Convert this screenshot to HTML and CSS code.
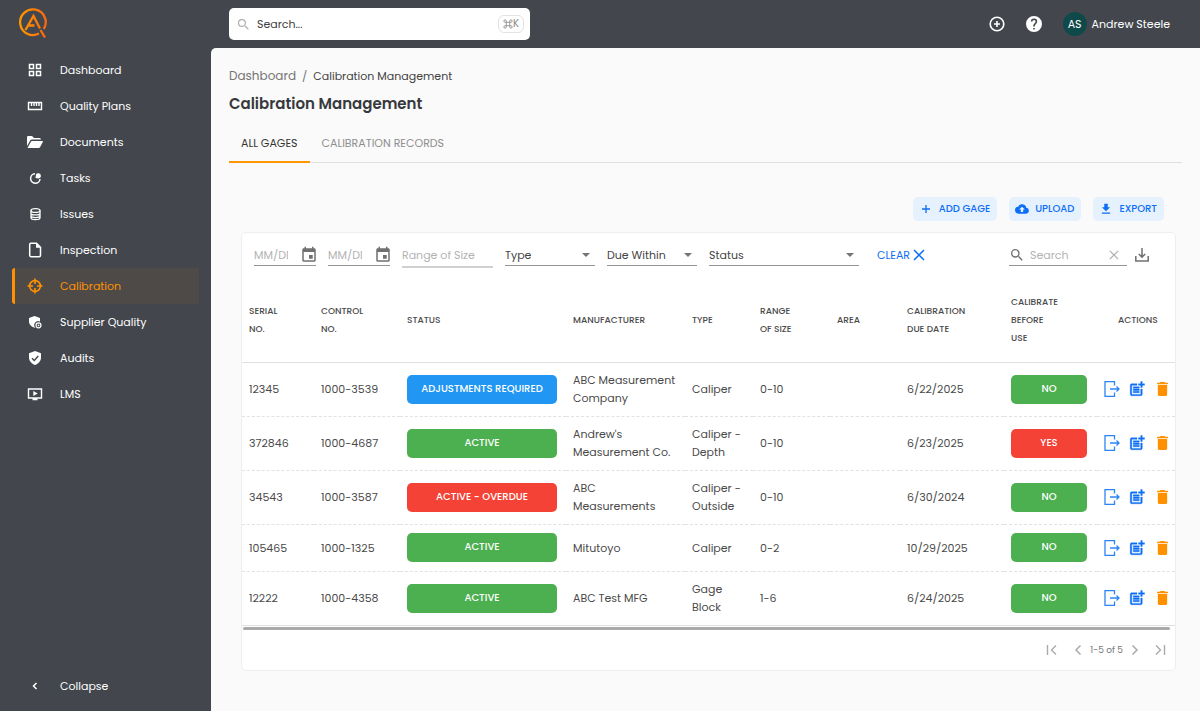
FILE: index.html
```html
<!DOCTYPE html>
<html lang="en">
<head>
<meta charset="utf-8">
<title>Calibration Management</title>
<link rel="stylesheet" href="styles.css">
</head>
<body>
<svg class="sprite" aria-hidden="true">
  <symbol id="i-search" viewBox="0 0 24 24"><path d="M15.5 14h-.79l-.28-.27A6.47 6.47 0 0 0 16 9.5 6.5 6.5 0 1 0 9.5 16c1.61 0 3.09-.59 4.23-1.57l.27.28v.79l5 4.99L20.49 19l-4.99-5zm-6 0a4.5 4.5 0 1 1 0-9 4.5 4.5 0 0 1 0 9z"/></symbol>
  <symbol id="i-event" viewBox="0 0 24 24"><path d="M17 12h-5v5h5v-5zM16 1v2H8V1H6v2H5c-1.11 0-2 .9-2 2v14a2 2 0 0 0 2 2h14c1.1 0 2-.9 2-2V5c0-1.1-.9-2-2-2h-1V1h-2zm3 18H5V8h14v11z"/></symbol>
  <symbol id="i-x" viewBox="0 0 12 12"><path d="M1 1l10 10M11 1L1 11" fill="none" stroke="currentColor" stroke-width="1.5"/></symbol>
  <symbol id="i-open" viewBox="0 0 16 16"><path d="M10.500 4.500V.7H1v14.600h9.500V11.500M6 8h9M12.500 5.500L15 8l-2.500 2.500" fill="none" stroke="#2b84f5" stroke-width="1.300"/></symbol>
  <symbol id="i-add" viewBox="0 0 24 24"><path d="M17 19.220H5V7h7V5H5c-1.100 0-2 .900-2 2v12c0 1.100.900 2 2 2h12c1.100 0 2-.900 2-2v-7h-2v7.220z M19 2h-2v3h-3v2h3v2.990h2V7h3V5h-3V2z M7 9h8v2H7z M7 12h8v2H7z M7 15h8v2H7z" stroke="currentColor" stroke-width=".5"/></symbol>
  <symbol id="i-trash" viewBox="0 0 14 18"><path d="M1 16c0 1.100.900 2 2 2h8c1.100 0 2-.900 2-2V4H1v12zM14 1h-3.500l-1-1h-5l-1 1H0v2h14V1z"/></symbol>
  <symbol id="i-down" viewBox="0 0 24 24"><path d="M19 9h-4V3H9v6H5l7 7 7-7zM5 18v2h14v-2H5z"/></symbol>
  <symbol id="i-first" viewBox="0 0 12 12"><path d="M1.500 1v10M10 1.500L5.500 6l4.500 4.500" fill="none" stroke="currentColor" stroke-width="1.400"/></symbol>
  <symbol id="i-prev" viewBox="0 0 12 12"><path d="M8.500 1.500L4 6l4.500 4.500" fill="none" stroke="currentColor" stroke-width="1.500"/></symbol>
</svg>

<header class="topbar">
  <a class="logo" href="#" aria-label="Home">
    <svg width="30" height="32" viewBox="0 0 30 32" fill="none" stroke-width="2.300">
      <defs><linearGradient id="flame" x1="0" y1="0" x2="1" y2="0"><stop offset="0" stop-color="#ff9800"/><stop offset="1" stop-color="#f9690e"/></linearGradient></defs>
      <path stroke="url(#flame)" d="M20 26.500A12.800 12.800 0 1 1 24.800 22M6.500 23L14.500 9l6.500 12.500M9.500 18.500h6M21.500 23l4.500 7.500"/>
    </svg>
  </a>
  <label class="global-search">
    <svg width="15" height="15"><use href="#i-search"/></svg>
    <input type="text" placeholder="Search..." aria-label="Search everything">
    <kbd><svg width="10" height="10" viewBox="0 0 24 24" fill="none" stroke="currentColor" stroke-width="2"><path d="M8 8h8v8H8zM8 8V5a3 3 0 1 0-3 3zM16 8h3a3 3 0 1 0-3-3zM16 16v3a3 3 0 1 0 3-3zM8 16H5a3 3 0 1 0 3 3z"/></svg>K</kbd>
  </label>
  <div class="user-tools">
    <button class="icon-btn" aria-label="Create"><svg width="16" height="16" viewBox="0 0 16 16" fill="none" stroke="currentColor" stroke-width="1.600"><circle cx="8" cy="8" r="6.800"/><path d="M8 5v6M5 8h6"/></svg></button>
    <button class="icon-btn" aria-label="Help"><svg width="16" height="16" viewBox="2 2 20 20" fill="currentColor"><path d="M12 2a10 10 0 1 0 0 20 10 10 0 0 0 0-20zm1 17h-2v-2h2v2zm2.070-7.750l-.900.920C13.450 12.900 13 13.500 13 15h-2v-.500c0-1.100.450-2.100 1.170-2.830l1.240-1.260c.370-.360.590-.860.590-1.410a2 2 0 1 0-4 0H8a4 4 0 1 1 8 0c0 .880-.360 1.680-.930 2.250z"/></svg></button>
    <button class="account"><span class="avatar">AS</span>Andrew Steele</button>
  </div>
</header>

<div class="shell">
  <nav class="sidebar" aria-label="Main">
    <a href="#"><svg width="16" height="16" viewBox="0 0 16 16" fill="none" stroke="currentColor" stroke-width="1.500"><path d="M2.500 2.500H6.500V6.500H2.500zM9.500 2.500h4v4h-4zM2.500 9.500h4v4h-4zM9.500 9.500h4v4h-4z"/></svg>Dashboard</a>
    <a href="#"><svg width="16" height="16" viewBox="0 0 16 16" fill="none" stroke="currentColor" stroke-width="1.400"><path d="M1.500 4.500h13v7h-13zM4.500 5v3M7 5v3M9.500 5v3M12 5v3"/></svg>Quality Plans</a>
    <a href="#"><svg width="16" height="16" viewBox="0 0 16 16" fill="currentColor"><path d="M0 3.300Q0 2 1.300 2H5l2 2h5.500Q14 4 14 5.500H5Q3.800 5.500 3.200 6.500L0 12zM.500 14L4 7.500Q4.300 7 5 7H15.500q.700 0 .4.700L13 13.200q-.4.800-1.200.8z"/></svg>Documents</a>
    <a href="#"><svg width="16" height="16" viewBox="0 0 16 16"><path d="M8 3.800A4.700 4.700 0 1 0 13 9" fill="none" stroke="currentColor" stroke-width="1.500"/><path d="M8.500 8L9 4.500Q9.500 3.200 11 3.200a2.600 2.600 0 0 1 .5 5.200z" fill="currentColor"/></svg>Tasks</a>
    <a href="#"><svg width="16" height="16" viewBox="0 0 16 16" fill="none" stroke="currentColor" stroke-width="1.300"><ellipse cx="8.500" cy="4.500" rx="4.500" ry="1.900"/><path d="M4 4.500v7.300c0 2.500 9 2.500 9 0V4.500M4 7.200c0 2.300 9 2.300 9 0M4 9.800c0 2.300 9 2.300 9 0"/></svg>Issues</a>
    <a href="#"><svg width="16" height="16" viewBox="0 0 16 16"><path d="M3.800 1.200H9.500L13.500 5.200V13.300Q13.500 14.800 12 14.800H4.300Q2.700 14.800 2.700 13.300V2.500Q2.700 1.200 3.800 1.200z" fill="none" stroke="currentColor" stroke-width="1.500"/><path d="M9 .800v5h5z" fill="currentColor"/></svg>Inspection</a>
    <a href="#" class="current" aria-current="page"><svg width="16" height="16" viewBox="0 0 16 16" fill="none" stroke="currentColor" stroke-width="1.600"><circle cx="8" cy="8" r="5.400"/><path d="M8 .500V6M8 10v5.500M.500 8H6M10 8h5.500"/></svg>Calibration</a>
    <a href="#"><svg width="16" height="16" viewBox="0 0 16 16"><path d="M7.500 2L13 4v3.500A4 4 0 0 0 8.500 14C4.500 13 2 10.500 2 7.500V4z" fill="currentColor"/><circle cx="11.500" cy="11.300" r="2.500" fill="none" stroke="currentColor" stroke-width="1.200"/><circle cx="11.500" cy="11.300" r=".9" fill="currentColor"/></svg>Supplier Quality</a>
    <a href="#"><svg width="16" height="16" viewBox="0 0 16 16"><path d="M8 1l6 2.300V7.500c0 3.500-2.500 6.300-6 7.500-3.500-1.200-6-4-6-7.500V3.300z" fill="currentColor"/><path d="M5 8.200l2.200 2.200L11.300 6" fill="none" stroke="#43474d" stroke-width="1.400"/></svg>Audits</a>
    <a href="#"><svg width="16" height="16" viewBox="0 0 16 16"><path d="M1.500 3h13v9h-13zM5.500 13.500h5" fill="none" stroke="currentColor" stroke-width="1.400"/><path d="M6.300 5l4.400 2.500-4.400 2.500z" fill="currentColor"/></svg>LMS</a>
    <button class="collapse"><svg width="16" height="16" viewBox="0 0 16 16" fill="none" stroke="currentColor" stroke-width="1.500"><path d="M9.500 5L6.500 8l3 3"/></svg>Collapse</button>
  </nav>

  <main class="content">
    <nav class="crumbs" aria-label="Breadcrumb"><a href="#">Dashboard</a><span>/</span><span class="here">Calibration Management</span></nav>
    <h1>Calibration Management</h1>
    <div class="tabs" role="tablist">
      <button role="tab" aria-selected="true" class="tab selected">ALL GAGES</button>
      <button role="tab" aria-selected="false" class="tab">CALIBRATION RECORDS</button>
    </div>

    <div class="page-actions">
      <button><svg width="14" height="14" viewBox="0 0 14 14" fill="none" stroke="currentColor" stroke-width="1.300"><path d="M7 3v8M3 7h8"/></svg>ADD GAGE</button>
      <button><svg width="14" height="14" viewBox="0 0 24 24" fill="currentColor"><path d="M19.350 10.040A7.490 7.490 0 0 0 5.350 8.040 6 6 0 0 0 6 20h13a5 5 0 0 0 .35-9.960zM14 13v4h-4v-4H7l5-5 5 5h-3z"/></svg>UPLOAD</button>
      <button><svg width="14" height="14" fill="currentColor"><use href="#i-down"/></svg>EXPORT</button>
    </div>

    <section class="card">
      <form class="filters">
        <label class="field date"><input type="text" placeholder="MM/DD/YYYY" aria-label="Due from"><svg width="18" height="18"><use href="#i-event"/></svg></label>
        <label class="field date"><input type="text" placeholder="MM/DD/YYYY" aria-label="Due to"><svg width="18" height="18"><use href="#i-event"/></svg></label>
        <label class="field range"><input type="text" placeholder="Range of Size" aria-label="Range of Size"></label>
        <label class="field pick"><select aria-label="Type"><option>Type</option></select></label>
        <label class="field pick"><select aria-label="Due Within"><option>Due Within</option></select></label>
        <label class="field pick wide"><select aria-label="Status"><option>Status</option></select></label>
        <button type="reset" class="clear">CLEAR<svg width="12" height="12"><use href="#i-x"/></svg></button>
        <label class="field find"><svg width="16" height="16"><use href="#i-search"/></svg><input type="text" placeholder="Search" aria-label="Search gages"><svg class="faint" width="10" height="10"><use href="#i-x"/></svg></label>
        <button type="button" class="save" aria-label="Download"><svg width="16" height="16" viewBox="0 0 16 16" fill="none" stroke="currentColor" stroke-width="1.500"><path d="M8 1v9M4.800 7L8 10.200 11.200 7M1.800 9v5h12.400V9"/></svg></button>
      </form>

      <table>
        <colgroup><col class="c-serial"><col class="c-control"><col class="c-status"><col class="c-maker"><col class="c-type"><col class="c-range"><col class="c-area"><col class="c-due"><col class="c-before"><col class="c-actions"></colgroup>
        <thead><tr><th>SERIAL<br>NO.</th><th>CONTROL<br>NO.</th><th>STATUS</th><th>MANUFACTURER</th><th>TYPE</th><th>RANGE<br>OF SIZE</th><th>AREA</th><th>CALIBRATION<br>DUE DATE</th><th>CALIBRATE<br>BEFORE<br>USE</th><th class="last">ACTIONS</th></tr></thead>
        <tbody>
          <tr><td>12345</td><td>1000-3539</td><td><span class="badge blue">ADJUSTMENTS REQUIRED</span></td><td>ABC Measurement<br>Company</td><td>Caliper</td><td>0-10</td><td></td><td>6/22/2025</td><td><span class="badge green">NO</span></td><td><div class="row-tools"><button aria-label="Check out"><svg width="16" height="16"><use href="#i-open"/></svg></button><button aria-label="Add record"><svg width="18" height="18"><use href="#i-add"/></svg></button><button class="del" aria-label="Delete"><svg width="11" height="14"><use href="#i-trash"/></svg></button></div></td></tr>
          <tr><td>372846</td><td>1000-4687</td><td><span class="badge green">ACTIVE</span></td><td>Andrew's<br>Measurement Co.</td><td>Caliper -<br>Depth</td><td>0-10</td><td></td><td>6/23/2025</td><td><span class="badge red">YES</span></td><td><div class="row-tools"><button aria-label="Check out"><svg width="16" height="16"><use href="#i-open"/></svg></button><button aria-label="Add record"><svg width="18" height="18"><use href="#i-add"/></svg></button><button class="del" aria-label="Delete"><svg width="11" height="14"><use href="#i-trash"/></svg></button></div></td></tr>
          <tr><td>34543</td><td>1000-3587</td><td><span class="badge red">ACTIVE - OVERDUE</span></td><td>ABC<br>Measurements</td><td>Caliper -<br>Outside</td><td>0-10</td><td></td><td>6/30/2024</td><td><span class="badge green">NO</span></td><td><div class="row-tools"><button aria-label="Check out"><svg width="16" height="16"><use href="#i-open"/></svg></button><button aria-label="Add record"><svg width="18" height="18"><use href="#i-add"/></svg></button><button class="del" aria-label="Delete"><svg width="11" height="14"><use href="#i-trash"/></svg></button></div></td></tr>
          <tr><td>105465</td><td>1000-1325</td><td><span class="badge green">ACTIVE</span></td><td>Mitutoyo</td><td>Caliper</td><td>0-2</td><td></td><td>10/29/2025</td><td><span class="badge green">NO</span></td><td><div class="row-tools"><button aria-label="Check out"><svg width="16" height="16"><use href="#i-open"/></svg></button><button aria-label="Add record"><svg width="18" height="18"><use href="#i-add"/></svg></button><button class="del" aria-label="Delete"><svg width="11" height="14"><use href="#i-trash"/></svg></button></div></td></tr>
          <tr><td>12222</td><td>1000-4358</td><td><span class="badge green">ACTIVE</span></td><td>ABC Test MFG</td><td>Gage<br>Block</td><td>1-6</td><td></td><td>6/24/2025</td><td><span class="badge green">NO</span></td><td><div class="row-tools"><button aria-label="Check out"><svg width="16" height="16"><use href="#i-open"/></svg></button><button aria-label="Add record"><svg width="18" height="18"><use href="#i-add"/></svg></button><button class="del" aria-label="Delete"><svg width="11" height="14"><use href="#i-trash"/></svg></button></div></td></tr>
        </tbody>
      </table>
      <div class="scroll-thumb"></div>
      <div class="pager">
        <button aria-label="First page"><svg width="12" height="12"><use href="#i-first"/></svg></button>
        <button class="step" aria-label="Previous page"><svg width="12" height="12"><use href="#i-prev"/></svg></button>
        <span>1-5 of 5</span>
        <button class="flip" aria-label="Next page"><svg width="12" height="12"><use href="#i-prev"/></svg></button>
        <button class="flip end" aria-label="Last page"><svg width="12" height="12"><use href="#i-first"/></svg></button>
      </div>
    </section>
  </main>
</div>
</body>
</html>
```
FILE: styles.css
```css
* { box-sizing: border-box; }
body {
  margin: 0;
  min-height: 100vh;
  display: flex;
  flex-direction: column;
  background: #43474d;
  color: #424242;
  font: 11px/18px Poppins, Inter, "Open Sans", sans-serif;
}
button, input, select { font: inherit; color: inherit; background: none; border: 0; padding: 0; margin: 0; outline: 0; }
button { cursor: pointer; display: flex; align-items: center; white-space: nowrap; }
a { color: inherit; text-decoration: none; }
svg { flex: none; fill: currentColor; }
svg[fill="none"] { fill: none; }
.sprite { display: none; }

.topbar { height: 48px; display: flex; align-items: center; padding-right: 30px; }
.logo { width: 229px; padding-left: 19px; display: flex; padding-bottom: 2px; }
.global-search {
  width: 301px; height: 32px; display: flex; align-items: center; gap: 6px;
  padding: 0 6px 0 7px; background: #fff; border-radius: 5px; color: #b0b0b0;
}
.global-search input { flex: 1; min-width: 0; color: #424242; }
.global-search input::placeholder { color: #424242; opacity: 1; }
kbd { display: flex; align-items: center; height: 18px; padding: 0 4px; border: 1px solid #e2e2e2; border-radius: 6px; font: 10px/16px Poppins, Inter, sans-serif; color: #888; }
.user-tools { margin-left: auto; display: flex; align-items: center; gap: 21px; color: #fff; }
.account { gap: 5px; }
.avatar { width: 24px; height: 24px; border-radius: 50%; background: #10494a; line-height: 24px; text-align: center; }

.shell { flex: 1; display: flex; }
.sidebar { width: 211px; flex: none; display: flex; flex-direction: column; padding: 4px 12px 7px; color: #fff; }
.sidebar > * { height: 36px; display: flex; align-items: center; gap: 17px; padding-left: 12px; border-left: 3px solid transparent; }
.sidebar .current { color: #ff9100; border-left-color: #ff9100; background: #4d4a48; border-radius: 3px 0 0 3px; }
.sidebar .collapse { margin-top: auto; }

.content { flex: 1; min-width: 0; padding: 19px 18px 18px; background: #fafafa; border-top-left-radius: 5px; }
.crumbs { display: flex; gap: 6px; color: #757575; }
.crumbs a { font-size: 12px; }
.crumbs .here { color: #424242; }
h1 { margin: 7px 0 9px; font-size: 15px; line-height: 24px; font-weight: 600; color: #37393d; }
.tabs { display: flex; border-bottom: 1px solid #e0e0e0; }
.tab { height: 38px; padding: 0 12px; color: #8e8e8e; border-bottom: 2px solid transparent; margin-bottom: -1px; }
.tab.selected { color: #333; border-bottom-color: #ff9800; }

.page-actions { display: flex; justify-content: flex-end; gap: 12px; padding: 34px 18px 11px 0; }
.page-actions button { height: 24px; gap: 6px; padding: 0 7px 0 6px; border-radius: 5px; background: #e6f1fe; color: #0b6ef6; font-size: 10px; font-weight: 500; }

.card { margin: 0 6px 0 12px; background: #fff; border: 1px solid #eee; border-radius: 5px; }
.filters { display: flex; align-items: flex-start; gap: 12px; height: 45px; padding: 10px 25px 0 12px; }
.field { display: flex; align-items: center; height: 23px; padding-top: 1px; border-bottom: 1px solid #949494; color: #707070; }
.field input { width: 100%; min-width: 0; }
.field input::placeholder { color: #b3b3b3; opacity: 1; }
.date { width: 62px; gap: 12px; flex: none; }
.date svg { margin-right: -2px; }
.range { width: 91px; height: 25px; border-bottom: 2px solid #d0d0d0; }
.pick { width: 90px; flex: none; color: #444; }
.pick.wide { width: 150px; }
.pick select { appearance: none; width: 100%; }
.pick::after { content: ""; border: 4px solid transparent; border-top-color: #757575; border-bottom-width: 0; margin-right: 5px; }
.clear { height: 23px; margin-left: 6px; gap: 3px; color: #0b6ef6; }
.find { width: 118px; margin-left: auto; gap: 5px; }
.find .faint { color: #b0b0b0; margin-right: 8px; }
.save { height: 23px; margin-left: -5px; color: #707070; }

table { width: 100%; table-layout: fixed; border-collapse: separate; border-spacing: 0; color: #4a4a4a; }
.c-serial { width: 72px; } .c-control { width: 86px; } .c-status { width: 166px; } .c-maker { width: 119px; }
.c-type { width: 68px; } .c-range { width: 77px; } .c-area { width: 70px; } .c-due { width: 104px; }
.c-before { width: 93px; } .c-actions { width: 78px; }
th { padding: 15px 7px; text-align: left; font-size: 9px; line-height: 18px; font-weight: 500; border-bottom: 1px solid #e0e0e0; }
th.last { padding-left: 21px; }
td { padding: 8px 7px 9px; border-bottom: 1px dashed #e2e2e2; white-space: nowrap; }
tbody tr:last-child td { border-bottom: 1px solid #e0e0e0; }
.badge { display: block; height: 29px; line-height: 28px; width: 150px; max-width: 100%; border-radius: 5px; color: #fff; text-align: center; font-size: 10px; font-weight: 500; }
td:nth-child(9) .badge { width: 76px; }
.blue { background: #2196f3; } .green { background: #4caf50; } .red { background: #f44336; }
.row-tools { display: flex; align-items: center; gap: 8px; color: #0b6ef6; }
.row-tools .del { color: #ff9100; margin-left: auto; }

.scroll-thumb { height: 3px; margin: 1px 5px 0 1px; border-radius: 2px; background: #aaa; }
.pager { height: 40px; display: flex; align-items: center; justify-content: flex-end; padding-right: 9px; color: #aaa; }
.pager span { font-size: 9px; margin: 0 6px; color: #777; }
.step { margin-left: 14px; }
.flip { transform: rotate(180deg); }
.end { margin-left: 13px; }
```
